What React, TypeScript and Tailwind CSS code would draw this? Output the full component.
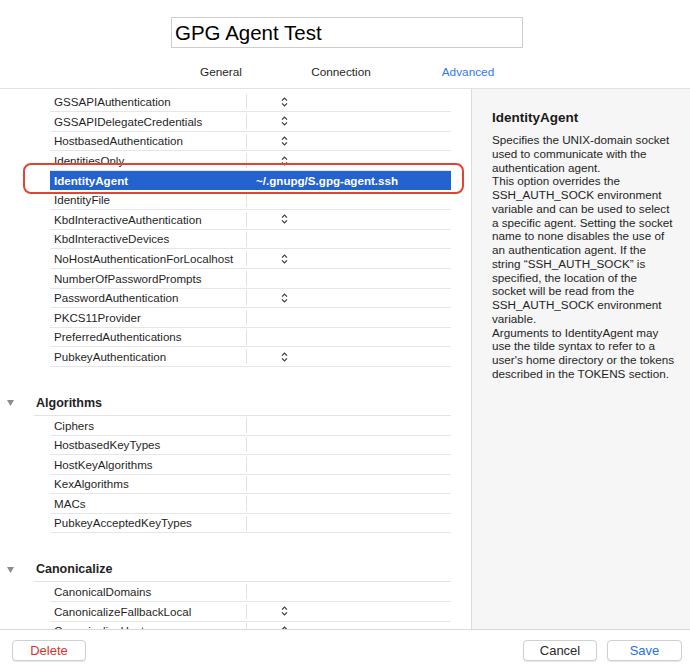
import React from "react"

type Row = { name: string; popup?: boolean; value?: string; selected?: boolean }

const general: Row[] = [
  { name: "GSSAPIAuthentication", popup: true },
  { name: "GSSAPIDelegateCredentials", popup: true },
  { name: "HostbasedAuthentication", popup: true },
  { name: "IdentitiesOnly", popup: true },
  { name: "IdentityAgent", value: "~/.gnupg/S.gpg-agent.ssh", selected: true },
  { name: "IdentityFile" },
  { name: "KbdInteractiveAuthentication", popup: true },
  { name: "KbdInteractiveDevices" },
  { name: "NoHostAuthenticationForLocalhost", popup: true },
  { name: "NumberOfPasswordPrompts" },
  { name: "PasswordAuthentication", popup: true },
  { name: "PKCS11Provider" },
  { name: "PreferredAuthentications" },
  { name: "PubkeyAuthentication", popup: true },
]

const algorithms: Row[] = [
  { name: "Ciphers" },
  { name: "HostbasedKeyTypes" },
  { name: "HostKeyAlgorithms" },
  { name: "KexAlgorithms" },
  { name: "MACs" },
  { name: "PubkeyAcceptedKeyTypes" },
]

const canonicalize: Row[] = [
  { name: "CanonicalDomains" },
  { name: "CanonicalizeFallbackLocal", popup: true },
  { name: "CanonicalizeHostname", popup: true },
  { name: "CanonicalizeMaxDots" },
  { name: "CanonicalizePermittedCNAMEs" },
]

const helpLines = [
  "Specifies the UNIX-domain socket",
  "used to communicate with the",
  "authentication agent.",
  "This option overrides the",
  "SSH_AUTH_SOCK environment",
  "variable and can be used to select",
  "a specific agent. Setting the socket",
  "name to none disables the use of",
  "an authentication agent. If the",
  "string “SSH_AUTH_SOCK” is",
  "specified, the location of the",
  "socket will be read from the",
  "SSH_AUTH_SOCK environment",
  "variable.",
  "Arguments to IdentityAgent may",
  "use the tilde syntax to refer to a",
  "user's home directory or the tokens",
  "described in the TOKENS section.",
]

function Stepper() {
  return (
    <svg width="7" height="10" viewBox="0 0 7 10" className="ml-[34px]">
      <path d="M1 3.6 L3.5 1.1 L6 3.6 M1 6.4 L3.5 8.9 L6 6.4" stroke="#3a3a3a" strokeWidth="1.2" fill="none" />
    </svg>
  )
}

function OptionRow({ row }: { row: Row }) {
  if (row.selected) {
    return (
      <div className="h-[19.6px] flex items-center bg-[#2462cf] text-white font-bold border-b border-white">
        <div className="w-[197px] pl-[4px] shrink-0">{row.name}</div>
        <div className="pl-[9px]">{row.value}</div>
      </div>
    )
  }
  return (
    <div className="h-[19.6px] flex items-center border-b border-[#e6e6e6]">
      <div className="w-[196px] pl-[4px] shrink-0 whitespace-nowrap">{row.name}</div>
      <div className="w-px h-[15px] bg-[#e2e2e2] shrink-0" />
      {row.popup && <Stepper />}
    </div>
  )
}

function Section({ title, rows }: { title: string; rows: Row[] }) {
  return (
    <div className="mt-[24px]">
      <div className="flex items-center h-[25px]">
        <div className="w-[34px] pl-[7px] shrink-0 flex items-center">
          <svg width="7" height="6" viewBox="0 0 7 6">
            <polygon points="0,0 7,0 3.5,6" fill="#8c8c8c" />
          </svg>
        </div>
        <div className="flex-1 mr-[20px] h-full flex items-center pl-[2px] border-b border-[#e3e3e3] font-bold text-[12.5px]">
          {title}
        </div>
      </div>
      <div className="ml-[50px] w-[401px]">
        {rows.map((r) => (
          <OptionRow key={r.name} row={r} />
        ))}
      </div>
    </div>
  )
}

export default function App() {
  return (
    <div className="w-[690px] h-[668px] flex flex-col bg-white overflow-hidden text-[#1f1f1f] font-['Liberation_Sans',Arial,sans-serif]">
      <header className="h-[88px] shrink-0 flex flex-col">
        <div className="ml-[171px] mt-[17px] w-[352px] h-[31px] border border-[#cdcdcd] flex items-center pl-[3px] pt-[2px] text-[20.5px] text-black">
          GPG Agent Test
        </div>
        <nav className="ml-[161px] mt-[17px] flex text-[11.8px] leading-[14px]">
          <div className="w-[120px] text-center">General</div>
          <div className="w-[120px] text-center">Connection</div>
          <div className="w-[134px] text-center text-[#2c7cf2]">Advanced</div>
        </nav>
      </header>

      <main className="relative flex-1 min-h-0 flex border-t border-[#e2e2e2]">
        <div className="w-[471px] shrink-0 overflow-hidden pt-[3.6px] text-[11.6px]">
          <div className="ml-[50px] w-[401px]">
            {general.map((r) => (
              <OptionRow key={r.name} row={r} />
            ))}
          </div>
          <Section title="Algorithms" rows={algorithms} />
          <Section title="Canonicalize" rows={canonicalize} />
        </div>

        <aside className="flex-1 bg-[#f6f6f6] border-l border-[#dcdcdc] pl-[20px] pt-[21px]">
          <h2 className="text-[13.5px] leading-[16px] font-bold text-[#1a1a1a]">IdentityAgent</h2>
          <div className="mt-[7px] text-[11.7px] leading-[13.75px] whitespace-nowrap">
            {helpLines.map((l, i) => (
              <div key={i}>{l}</div>
            ))}
          </div>
        </aside>

        <div className="absolute left-[23px] top-[74px] w-[441px] h-[31px] rounded-[8px] border-[2.5px] border-[#e5432f] pointer-events-none" />
      </main>

      <footer className="h-[39px] shrink-0 border-t border-[#dadada] flex items-start pt-[10px] px-[12px] text-[13px]">
        <button className="w-[74px] h-[21px] rounded-[4px] bg-white border border-[#d0d0d0] shadow-[0_1px_1px_rgba(0,0,0,0.1)] text-[#d9352b]">
          Delete
        </button>
        <div className="flex-1" />
        <button className="w-[74px] h-[21px] rounded-[4px] bg-white border border-[#d0d0d0] shadow-[0_1px_1px_rgba(0,0,0,0.1)] text-[#2a2a2a]">
          Cancel
        </button>
        <button className="ml-[10px] mr-[-4px] w-[75px] h-[21px] rounded-[4px] bg-white border border-[#d0d0d0] shadow-[0_1px_1px_rgba(0,0,0,0.1)] text-[#1f6ff0]">
          Save
        </button>
      </footer>
    </div>
  )
}
